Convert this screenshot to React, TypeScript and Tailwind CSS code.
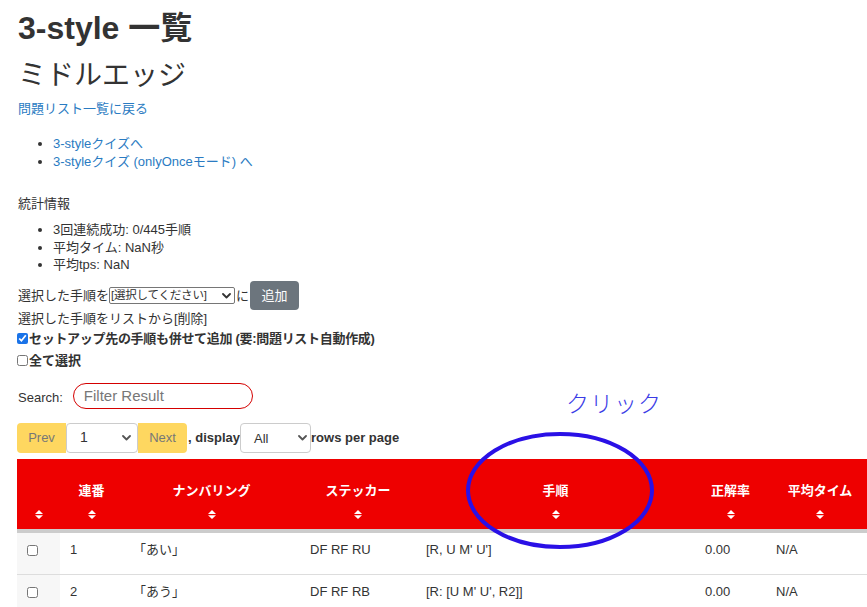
import React from "react";

const FONT = { fontFamily: '"Liberation Sans", Arial, "Noto Sans CJK JP", sans-serif' };

function SortIcon() {
  return (
    <svg width="8" height="9" viewBox="0 0 8 9" className="mx-auto block">
      <polygon points="0,4 4,0 8,4" fill="#fff" />
      <polygon points="0,5.2 8,5.2 4,9" fill="#fff" />
    </svg>
  );
}

function Chevron({ color = "#333" }: { color?: string }) {
  return (
    <svg width="9" height="6" viewBox="0 0 9 6">
      <path d="M1 1 L4.5 4.5 L8 1" fill="none" stroke={color} strokeWidth="1.8" strokeLinecap="round" strokeLinejoin="round" />
    </svg>
  );
}

const headers = ["", "連番", "ナンバリング", "ステッカー", "手順", "正解率", "平均タイム"];
const rows = [
  ["1", "「あい」", "DF RF RU", "[R, U M' U']", "0.00", "N/A"],
  ["2", "「あう」", "DF RF RB", "[R: [U M' U', R2]]", "0.00", "N/A"],
];

export default function App() {
  return (
    <div className="relative w-[867px] h-[607px] overflow-hidden bg-white text-[13px] text-[#333]" style={FONT}>
      <div className="pl-[17px]">
        <h1 className="mt-[9px] ml-[1px] text-[32px] leading-[38px] font-bold">3-style 一覧</h1>
        <h2 className="mt-[13px] ml-[1px] text-[28px] leading-[32px] font-normal">ミドルエッジ</h2>
        <a className="mt-[8px] ml-[1px] block leading-[18px] text-[#2a7bc2]" href="#">問題リスト一覧に戻る</a>
        <ul className="mt-[17px] list-disc pl-[36px] leading-[17.5px] text-[#2a7bc2]">
          <li className="marker:text-[#333]"><a href="#">3-styleクイズへ</a></li>
          <li className="marker:text-[#333]"><a href="#">3-styleクイズ (onlyOnceモード) へ</a></li>
        </ul>
        <div className="mt-[25px] ml-[1px] leading-[18px]">統計情報</div>
        <ul className="mt-[8px] list-disc pl-[36px] leading-[17.5px]">
          <li>3回連続成功: 0/445手順</li>
          <li>平均タイム: NaN秒</li>
          <li>平均tps: NaN</li>
        </ul>
        <div className="mt-[8px] ml-[1px] flex h-[28px] items-center">
          <span>選択した手順を</span>
          <div className="flex h-[17px] w-[126px] items-center justify-between rounded-[2px] border border-[#767676] pl-[1px] pr-[3px]">
            <span className="whitespace-nowrap text-[11.5px] tracking-[-0.2px]">[選択してください]</span>
            <Chevron />
          </div>
          <span className="ml-[1px]">に</span>
          <button className="ml-[1px] h-[29px] w-[49px] rounded-[4px] bg-[#6c757d] text-[13px] text-white">追加</button>
        </div>
        <div className="ml-[1px] leading-[18px]">選択した手順をリストから[削除]</div>
        <label className="mt-[2px] flex items-center leading-[18px] font-bold tracking-[-0.3px]">
          <input type="checkbox" defaultChecked className="m-0 mr-[1px] h-[11px] w-[11px] accent-[#1a73e8]" />
          セットアップ先の手順も併せて追加 (要:問題リスト自動作成)
        </label>
        <label className="mt-[4px] flex items-center leading-[18px] font-bold">
          <input type="checkbox" className="m-0 mr-[1px] h-[11px] w-[11px]" />
          全て選択
        </label>
        <div className="mt-[13px] ml-[1px] flex items-center">
          <span className="mt-[4px]">Search:</span>
          <input
            placeholder="Filter Result"
            className="ml-[10px] h-[26px] w-[180px] rounded-full border border-[#d40000] px-[10px] text-[15px] text-[#333] outline-none placeholder:text-[#777]"
            style={FONT}
          />
        </div>
        <div className="mt-[14px] flex h-[30px] items-center">
          <button className="h-[30px] w-[49px] rounded-l-[4px] bg-[#fed760] text-[13px] text-[#777]">Prev</button>
          <div className="flex h-[30px] w-[72px] items-center justify-between rounded-[4px] border border-[#ccc] bg-white pl-[13px] pr-[6px]">
            <span className="text-[14px]">1</span>
            <Chevron color="#555" />
          </div>
          <button className="h-[30px] w-[49px] rounded-r-[4px] bg-[#fed760] text-[13px] text-[#777]">Next</button>
          <span className="ml-[1px] font-bold">, display</span>
          <div className="flex h-[30px] w-[71px] items-center justify-between rounded-[4px] border border-[#ccc] bg-white pl-[13px] pr-[3px]">
            <span className="mt-[2px] text-[13px]">All</span>
            <Chevron color="#555" />
          </div>
          <span className="font-bold">rows per page</span>
        </div>
        <table className="mt-[6px] w-[857px] table-fixed border-collapse">
          <colgroup>
            <col className="w-[43px]" />
            <col className="w-[63px]" />
            <col className="w-[177px]" />
            <col className="w-[116px]" />
            <col className="w-[279px]" />
            <col className="w-[71px]" />
            <col className="w-[108px]" />
          </colgroup>
          <thead>
            <tr className="border-b-[4px] border-[#ccc] bg-[#ee0000]">
              {headers.map((h, i) => (
                <th key={i} className="p-0 pt-[23px] pb-[10px] align-top text-center font-bold text-white">
                  <div className="h-[18px] leading-[18px]">{h}</div>
                  <div className="mt-[10px]"><SortIcon /></div>
                </th>
              ))}
            </tr>
          </thead>
          <tbody>
            {rows.map((r, i) => (
              <tr key={i} className="border-b border-[#ddd]">
                <td className="bg-[#f7f7f7] pl-[10px] pt-[12px] pb-[18px] align-top">
                  <input type="checkbox" className="m-0 block h-[11px] w-[11px]" />
                </td>
                {r.map((c, j) => (
                  <td key={j} className="pt-[8px] pb-[15px] pl-[10px] align-top leading-[18px] whitespace-nowrap">{c}</td>
                ))}
              </tr>
            ))}
          </tbody>
        </table>
      </div>

      <div className="absolute left-[566px] top-[389px] text-[23px] leading-[30px] font-light tracking-[1px] text-[#3b3be6]">クリック</div>
      <svg className="absolute left-[465px] top-[431px]" width="190" height="120" viewBox="0 0 190 120">
        <ellipse cx="95" cy="59.5" rx="92" ry="56.5" fill="none" stroke="#2a10e6" strokeWidth="4" />
      </svg>
    </div>
  );
}
